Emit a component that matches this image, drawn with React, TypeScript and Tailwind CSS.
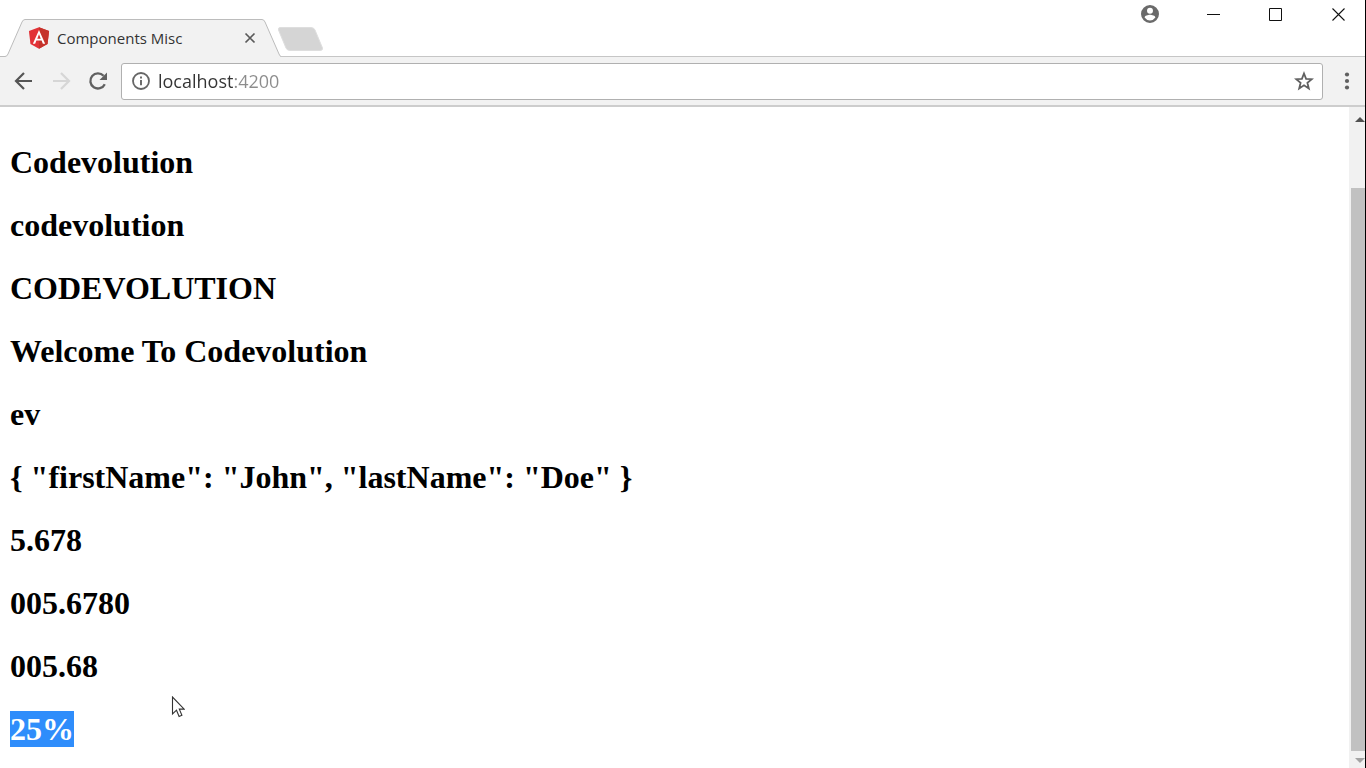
import { useState } from "react";

const headings = [
  "Codevolution",
  "codevolution",
  "CODEVOLUTION",
  "Welcome To Codevolution",
  "ev",
  '{ "firstName": "John", "lastName": "Doe" }',
  "5.678",
  "005.6780",
  "005.68",
];

function AngularLogo() {
  return (
    <svg viewBox="0 0 250 250" className="size-6 shrink-0" aria-hidden="true">
      <path fill="#e23237" d="M125 14 20 51l16 137 89 49 89-49 16-137z" />
      <path fill="#c5332b" d="M125 14v223l89-49 16-137z" />
      <path
        fill="#fff"
        d="M125 41 61 184h24l13-32h54l13 32h24zm18 91h-36l18-46z"
      />
    </svg>
  );
}

function TitleBar() {
  return (
    <header className="flex h-[57px] items-end justify-between border-b border-[#c6c6c6] bg-white">
      <div className="-mb-px flex items-end">
        <div className="relative flex h-[38px] w-[281px] items-center pr-6 pl-[27px]">
          <svg
            viewBox="0 0 281 38"
            className="absolute inset-0 h-[38px] w-[281px]"
            aria-hidden="true"
          >
            <path
              d="M0 37.500H5Q7 37.500 8 35L22 3Q23 .5 25 .5H262Q264 .5 265 3L279 35Q280 37.500 281 37.500V38H0z"
              fill="#f2f2f2"
            />
            <path
              d="M0 37.500H5Q7 37.500 8 35L22 3Q23 .5 25 .5H262Q264 .5 265 3L279 35Q280 37.500 281 37.500"
              fill="none"
              stroke="#bcbcbc"
            />
          </svg>
          <div className="relative flex flex-1 items-center">
            <AngularLogo />
            <span className="ml-1.5 flex-1 text-[15px] leading-6 whitespace-nowrap text-[#333]">
              Components Misc
            </span>
            <button type="button" aria-label="Close tab" className="p-px">
              <svg viewBox="0 0 12 12" className="size-3" aria-hidden="true">
                <path d="m1.500 1.500 9 9m0-9-9 9" stroke="#5a5a5a" strokeWidth="1.700" />
              </svg>
            </button>
          </div>
        </div>
        <button type="button" aria-label="New tab" className="-ml-1 pb-1.5">
          <svg viewBox="0 0 46 24" className="h-6 w-[46px]" aria-hidden="true">
            <path
              d="M3 .5H34Q37 .5 38 3L45.500 21Q46 23.500 43 23.500H13Q10 23.500 9 21L1.500 3Q1 .5 3 .5z"
              fill="#d5d5d5"
              stroke="#dedede"
            />
          </svg>
        </button>
      </div>
      <div className="flex items-start gap-[43px] self-start pt-1 pr-4">
        <button type="button" aria-label="Profile" className="flex size-5 items-center justify-center">
          <svg viewBox="2 2 20 20" className="size-[18px]" aria-hidden="true">
            <path
              fill="#6a6a6a"
              d="M12 2a10 10 0 1 0 0 20 10 10 0 0 0 0-20m0 3a3.300 3.300 0 1 1 0 6.600A3.300 3.300 0 0 1 12 5m0 14.200a7.200 7.200 0 0 1-6-3.200c0-2 4-3.100 6-3.100s6 1.100 6 3.100a7.200 7.200 0 0 1-6 3.200"
            />
          </svg>
        </button>
        <button type="button" aria-label="Minimize" className="flex size-5 items-center justify-center">
          <svg viewBox="0 0 14 14" className="size-3.5" aria-hidden="true">
            <path d="M1 7.500h13" stroke="#111" />
          </svg>
        </button>
        <button type="button" aria-label="Maximize" className="flex size-5 items-center justify-center">
          <svg viewBox="0 0 14 14" className="size-3.5" aria-hidden="true">
            <path d="M.5 1.500h12v12H.5z" fill="none" stroke="#111" />
          </svg>
        </button>
        <button type="button" aria-label="Close" className="flex size-5 items-center justify-center">
          <svg viewBox="0 0 14 14" className="size-3.5" aria-hidden="true">
            <path d="m.5 1.500 12 12m0-12-12 12" stroke="#111" strokeWidth="1.100" />
          </svg>
        </button>
      </div>
    </header>
  );
}

function Toolbar() {
  const [address, setAddress] = useState("localhost:4200");
  return (
    <nav className="flex h-[50px] items-center border-b-2 border-[#cdcdcd] bg-[#f2f2f2] pr-2 pl-3">
      <div className="flex gap-[13px]">
        <button type="button" aria-label="Back">
          <svg viewBox="0 0 24 24" className="size-6" aria-hidden="true">
            <path d="M20 12H4.500M12 4l-8 8 8 8" fill="none" stroke="#555" strokeWidth="2.200" />
          </svg>
        </button>
        <button type="button" aria-label="Forward">
          <svg viewBox="0 0 24 24" className="size-6" aria-hidden="true">
            <path d="M4 12h15.500M12 4l8 8-8 8" fill="none" stroke="#d6d6d6" strokeWidth="2.200" />
          </svg>
        </button>
        <button type="button" aria-label="Reload">
          <svg viewBox="0 0 24 24" className="size-6" aria-hidden="true">
            <path
              d="M18.800 15.200A7.600 7.600 0 1 1 17.600 6.800"
              fill="none"
              stroke="#606060"
              strokeWidth="2.300"
            />
            <path d="M21 3.500v7.500h-7.500z" fill="#606060" />
          </svg>
        </button>
      </div>
      <div className="ml-[11px] flex h-[37px] flex-1 items-center rounded-[3px] border border-[#b0b0b0] bg-white pr-2 pl-[9px]">
        <button type="button" aria-label="Site information">
          <svg viewBox="0 0 20 20" className="size-5" aria-hidden="true">
            <circle cx="10" cy="10" r="8" fill="none" stroke="#666" strokeWidth="1.800" />
            <path d="M10 9v5.200M10 5.400v2" stroke="#666" strokeWidth="1.900" />
          </svg>
        </button>
        <input
          aria-label="Address"
          value={address}
          onChange={(event) => setAddress(event.target.value)}
          className="ml-[7px] h-8 min-w-0 flex-1 bg-[linear-gradient(90deg,#333_75px,#8c8c8c_75px)] bg-clip-text text-[18px] text-transparent caret-black outline-none"
        />
        <button type="button" aria-label="Bookmark this page">
          <svg viewBox="0 0 20 20" className="size-5" aria-hidden="true">
            <path
              d="m10 2.500 2.100 5.300 5.700.4-4.400 3.600 1.400 5.600L10 14.300l-4.800 3.100 1.400-5.600-4.400-3.600 5.700-.4z"
              fill="none"
              stroke="#606060"
              strokeWidth="1.800"
            />
          </svg>
        </button>
      </div>
      <button type="button" aria-label="Menu" className="ml-[14px]">
        <svg viewBox="0 0 20 20" className="size-5" aria-hidden="true">
          <g fill="#606060">
            <circle cx="10" cy="3.500" r="2.100" />
            <circle cx="10" cy="10" r="2.100" />
            <circle cx="10" cy="16.500" r="2.100" />
          </g>
        </svg>
      </button>
    </nav>
  );
}

function Scrollbar() {
  return (
    <div className="flex w-4 shrink-0 flex-col overflow-hidden bg-[#f1f1f1] pl-0.5">
      <button type="button" aria-label="Scroll up" className="flex h-6 items-center pl-1">
        <svg viewBox="0 0 10 5" className="h-[5px] w-2.5" aria-hidden="true">
          <path d="M0 5 5 0l5 5z" fill="#505050" />
        </svg>
      </button>
      <div className="flex flex-1 flex-col pt-[57px]">
        <div className="flex-1 bg-[#c1c1c1]" />
      </div>
      <button type="button" aria-label="Scroll down" className="flex h-[17px] items-center pt-0.5 pl-1">
        <svg viewBox="0 0 10 5" className="h-[5px] w-2.5" aria-hidden="true">
          <path d="m0 0 5 5 5-5z" fill="#a3a3a3" />
        </svg>
      </button>
    </div>
  );
}

export default function App() {
  return (
    <div className="relative flex min-h-screen flex-col border-r border-black bg-white font-['Open_Sans','Noto_Sans',sans-serif]">
      <TitleBar />
      <Toolbar />
      <div className="flex flex-1">
        <main className="flex flex-1 flex-col gap-[27px] pt-[37px] pl-2.5 font-['Liberation_Serif',serif] text-[32px] leading-9 font-bold text-black">
          {headings.map((heading) => (
            <h2 key={heading}>{heading}</h2>
          ))}
          <h2>
            <span className="bg-[#2f8dfb] text-white">25%</span>
          </h2>
        </main>
        <Scrollbar />
      </div>
      <svg
        viewBox="0 0 14 22"
        className="pointer-events-none absolute top-[696px] left-[171px] h-[22px] w-3.5"
        aria-hidden="true"
      >
        <path
          d="M1.500 1v17l4-3.800 2.600 6.300 2.800-1.200-2.600-6.200h4.900z"
          fill="#fff"
          stroke="#333"
          strokeWidth="1.100"
        />
      </svg>
    </div>
  );
}
